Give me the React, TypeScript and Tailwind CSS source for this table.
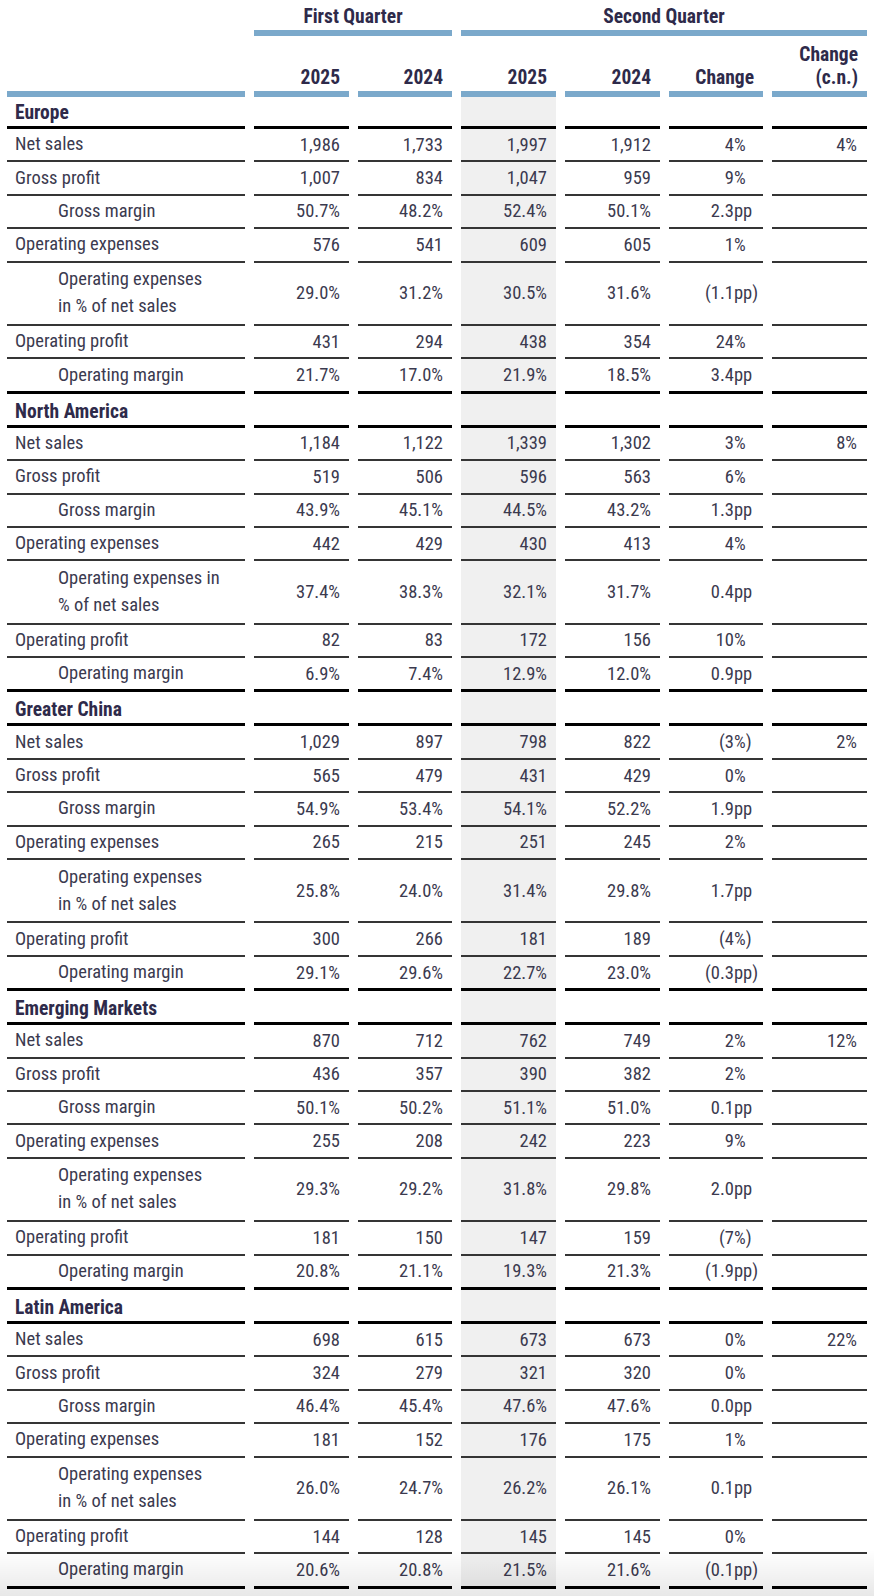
import React from "react";

type Row = {
  label: string[];
  indent?: boolean;
  vals: string[]; // 4 numeric + change
  cn?: string;
};

type Section = { name: string; rows: Row[] };

const mk = (opex2: string[], d: string[][], cn: string): Row[] => [
  { label: ["Net sales"], vals: d[0], cn },
  { label: ["Gross profit"], vals: d[1] },
  { label: ["Gross margin"], indent: true, vals: d[2] },
  { label: ["Operating expenses"], vals: d[3] },
  { label: opex2, indent: true, vals: d[4] },
  { label: ["Operating profit"], vals: d[5] },
  { label: ["Operating margin"], indent: true, vals: d[6] },
];

const STD = ["Operating expenses", "in % of net sales"];

const sections: Section[] = [
  {
    name: "Europe",
    rows: mk(
      STD,
      [
        ["1,986", "1,733", "1,997", "1,912", "4%"],
        ["1,007", "834", "1,047", "959", "9%"],
        ["50.7%", "48.2%", "52.4%", "50.1%", "2.3pp"],
        ["576", "541", "609", "605", "1%"],
        ["29.0%", "31.2%", "30.5%", "31.6%", "(1.1pp)"],
        ["431", "294", "438", "354", "24%"],
        ["21.7%", "17.0%", "21.9%", "18.5%", "3.4pp"],
      ],
      "4%"
    ),
  },
  {
    name: "North America",
    rows: mk(
      ["Operating expenses in", "% of net sales"],
      [
        ["1,184", "1,122", "1,339", "1,302", "3%"],
        ["519", "506", "596", "563", "6%"],
        ["43.9%", "45.1%", "44.5%", "43.2%", "1.3pp"],
        ["442", "429", "430", "413", "4%"],
        ["37.4%", "38.3%", "32.1%", "31.7%", "0.4pp"],
        ["82", "83", "172", "156", "10%"],
        ["6.9%", "7.4%", "12.9%", "12.0%", "0.9pp"],
      ],
      "8%"
    ),
  },
  {
    name: "Greater China",
    rows: mk(
      STD,
      [
        ["1,029", "897", "798", "822", "(3%)"],
        ["565", "479", "431", "429", "0%"],
        ["54.9%", "53.4%", "54.1%", "52.2%", "1.9pp"],
        ["265", "215", "251", "245", "2%"],
        ["25.8%", "24.0%", "31.4%", "29.8%", "1.7pp"],
        ["300", "266", "181", "189", "(4%)"],
        ["29.1%", "29.6%", "22.7%", "23.0%", "(0.3pp)"],
      ],
      "2%"
    ),
  },
  {
    name: "Emerging Markets",
    rows: mk(
      STD,
      [
        ["870", "712", "762", "749", "2%"],
        ["436", "357", "390", "382", "2%"],
        ["50.1%", "50.2%", "51.1%", "51.0%", "0.1pp"],
        ["255", "208", "242", "223", "9%"],
        ["29.3%", "29.2%", "31.8%", "29.8%", "2.0pp"],
        ["181", "150", "147", "159", "(7%)"],
        ["20.8%", "21.1%", "19.3%", "21.3%", "(1.9pp)"],
      ],
      "12%"
    ),
  },
  {
    name: "Latin America",
    rows: mk(
      STD,
      [
        ["698", "615", "673", "673", "0%"],
        ["324", "279", "321", "320", "0%"],
        ["46.4%", "45.4%", "47.6%", "47.6%", "0.0pp"],
        ["181", "152", "176", "175", "1%"],
        ["26.0%", "24.7%", "26.2%", "26.1%", "0.1pp"],
        ["144", "128", "145", "145", "0%"],
        ["20.6%", "20.8%", "21.5%", "21.6%", "(0.1pp)"],
      ],
      "22%"
    ),
  },
];

const W = [
  "w-[238px]",
  "w-[95px]",
  "w-[94px]",
  "w-[95px]",
  "w-[95px]",
  "w-[94px]",
  "w-[95px]",
];

const splitChange = (s: string) => {
  const m = s.match(/^(\(?[\d.]+)(.*)$/);
  return m ? [m[1], m[2]] : [s, ""];
};

function HeaderRow({ name, first }: { name: string; first: boolean }) {
  return (
    <div className={`flex gap-x-[9px] ${first ? "h-[32px]" : "h-[34px]"}`}>
      {W.map((w, i) => (
        <div
          key={i}
          className={`${w} shrink-0 border-b-[3px] border-black flex items-end ${
            i === 3 ? "bg-[#f0f0f0]" : ""
          }`}
        >
          {i === 0 && (
            <span className="pl-[8px] font-bold text-[19.5px] text-[#2e2a4a] leading-[26px]">
              {name}
            </span>
          )}
        </div>
      ))}
    </div>
  );
}

function DataRow({ row, last }: { row: Row; last: boolean }) {
  const double = row.label.length > 1;
  const h = double ? "h-[63.4px]" : last ? "h-[34.4px]" : "h-[33.4px]";
  const border = last
    ? "border-b-[3px] border-black"
    : "border-b-2 border-[#353535]";
  const [num, suf] = splitChange(row.vals[4]);
  return (
    <div className={`flex gap-x-[9px] ${h}`}>
      <div
        className={`${W[0]} shrink-0 ${border} flex flex-col justify-center ${
          row.indent ? "pl-[51px]" : "pl-[8px]"
        }`}
      >
        {row.label.map((l) => (
          <span key={l} className="leading-[27px] whitespace-nowrap">
            {l}
          </span>
        ))}
      </div>
      {row.vals.slice(0, 4).map((v, i) => (
        <div
          key={i}
          className={`${W[i + 1]} shrink-0 ${border} flex items-center justify-end pr-[9px] ${
            i === 2 ? "bg-[#f0f0f0]" : ""
          }`}
        >
          {v}
        </div>
      ))}
      <div className={`${W[5]} shrink-0 ${border} flex items-center`}>
        <span className="w-[65px] text-right shrink-0">{num}</span>
        <span>{suf}</span>
      </div>
      <div
        className={`${W[6]} shrink-0 ${border} flex items-center justify-end pr-[10px]`}
      >
        {row.cn ?? ""}
      </div>
    </div>
  );
}

export default function App() {
  return (
    <div className="relative w-[874px] h-[1596px] overflow-hidden bg-white font-[family-name:'Roboto_Condensed',Roboto,sans-serif] text-[18.5px] leading-[26px] text-[#3b3a4f]">
      <div className="pl-[7px]">
        {/* Quarter titles */}
        <div className="flex gap-x-[9px] h-[30px] text-[19.5px]">
          <div className={`${W[0]} shrink-0`} />
          <div className="w-[198px] shrink-0 flex items-end justify-center font-bold text-[#2e2a4a]">
            First Quarter
          </div>
          <div className="w-[406px] shrink-0 flex items-end justify-center font-bold text-[#2e2a4a]">
            Second Quarter
          </div>
        </div>
        <div className="flex gap-x-[9px] h-[6px]">
          <div className={`${W[0]} shrink-0`} />
          <div className="w-[198px] shrink-0 bg-[#7ba9cb]" />
          <div className="w-[406px] shrink-0 bg-[#7ba9cb]" />
        </div>
        {/* Column labels */}
        <div className="flex gap-x-[9px] h-[55px] font-bold text-[19.5px] text-[#2e2a4a]">
          {["", "2025", "2024", "2025", "2024", "Change", "Change|(c.n.)"].map(
            (t, i) => (
              <div
                key={i}
                className={`${W[i]} shrink-0 flex flex-col justify-end items-end pr-[9px] pb-[2px] leading-[23px]`}
              >
                {t.split("|").map((p) => (
                  <span key={p}>{p}</span>
                ))}
              </div>
            )
          )}
        </div>
        <div className="flex gap-x-[9px] h-[6px]">
          {W.map((w, i) => (
            <div key={i} className={`${w} shrink-0 bg-[#7ba9cb]`} />
          ))}
        </div>
        {sections.map((s, si) => (
          <div key={s.name}>
            <HeaderRow name={s.name} first={si === 0} />
            {s.rows.map((r, ri) => (
              <DataRow key={ri} row={r} last={ri === s.rows.length - 1} />
            ))}
          </div>
        ))}
      </div>
      <div className="pointer-events-none absolute inset-x-0 bottom-0 h-[46px] bg-linear-to-b from-black/0 to-black/[0.09]" />
    </div>
  );
}
